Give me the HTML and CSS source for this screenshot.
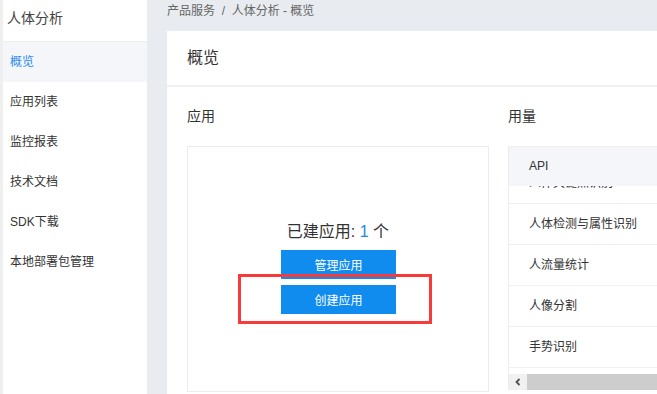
FILE: index.html
```html
<!DOCTYPE html>
<html lang="zh-CN">
<head>
  <meta charset="UTF-8" />
  <title>人体分析 - 概览</title>
<link rel="stylesheet" href="styles.css">
</head>
<body>
<div class="layout">
  <aside class="sidebar">
    <div class="side-title">人体分析</div>
    <ul class="menu">
      <li class="active">概览</li>
      <li>应用列表</li>
      <li>监控报表</li>
      <li>技术文档</li>
      <li>SDK下载</li>
      <li>本地部署包管理</li>
    </ul>
  </aside>

  <main class="main">
    <div class="crumb">产品服务 &nbsp;/&nbsp; 人体分析 - 概览</div>
    <div class="card">
      <div class="card-head">概览</div>
      <div class="card-body">
        <section class="apps">
          <h3 class="sec-title">应用</h3>
          <div class="app-box">
            <div class="app-count">已建应用: <span class="num">1</span> 个</div>
            <button class="btn">管理应用</button>
            <div class="highlight">
              <button class="btn">创建应用</button>
            </div>
          </div>
        </section>

        <section class="usage">
          <h3 class="sec-title">用量</h3>
          <div class="table">
            <div class="thead">API</div>
            <div class="tbody">
              <!-- body is scrolled a little under the header -->
              <div class="rows">
                <div class="row">人体关键点识别</div>
                <div class="row">人体检测与属性识别</div>
                <div class="row">人流量统计</div>
                <div class="row">人像分割</div>
                <div class="row">手势识别</div>
              </div>
            </div>
            <div class="hscroll">
              <div class="arrow">
                <svg width="8" height="8" viewBox="0 0 8 8"><path d="M5.5 1 L2.5 4 L5.5 7" fill="none" stroke="#505050" stroke-width="1.8"/></svg>
              </div>
              <div class="thumb"></div>
            </div>
          </div>
        </section>
      </div>
    </div>
  </main>
</div>
</body>
</html>
```

FILE: styles.css
```css
body {
  margin: 0;
  background-color: #e8ebef;
  font-family: "Liberation Sans", "Noto Sans CJK SC", sans-serif;
  color: #333;
  overflow: hidden;
}

.layout {
  display: flex;
  height: 394px;
  width: 760px;
}

.sidebar {
  width: 144px;
  flex-shrink: 0;
  background-color: #fff;
  border-left: 3px solid #efefef;
}

.side-title {
  height: 41px;
  line-height: 36px;
  padding-left: 4px;
  font-size: 14px;
  color: #444;
  border-bottom: 1px solid #eceef1;
}

.menu {
  list-style: none;
  margin: 0;
  padding: 0;
}

.menu li {
  height: 40px;
  line-height: 40px;
  padding-left: 7px;
  font-size: 12px;
  color: #333;
}

.menu li.active {
  background-color: #f4f6f9;
  color: #2b8ef0;
}

.main {
  flex: 1;
  padding-left: 20px;
}

.crumb {
  height: 31px;
  line-height: 22px;
  font-size: 12px;
  color: #666;
}

.card {
  background-color: #fff;
  height: 363px;
}

.card-head {
  height: 54px;
  line-height: 54px;
  padding-left: 20px;
  font-size: 16px;
  color: #333;
  border-bottom: 2px solid #eef0f3;
}

.card-body {
  display: flex;
  gap: 19px;
  padding-left: 20px;
}

.sec-title {
  margin: 0;
  height: 59px;
  line-height: 59px;
  font-size: 14px;
  font-weight: normal;
  color: #333;
}

.apps {
  width: 302px;
}

.app-box {
  height: 246px;
  border: 1px solid #ececec;
  display: flex;
  flex-direction: column;
  align-items: center;
  padding-top: 73px;
  box-sizing: border-box;
}

.app-count {
  font-size: 16px;
  line-height: 24px;
  margin-bottom: 6px;
  color: #333;
}

.app-count .num {
  color: #1e88e5;
}

.btn {
  width: 115px;
  height: 29px;
  border: none;
  background-color: #108cee;
  color: #fff;
  font-family: inherit;
  font-size: 12px;
  padding: 0;
  margin-left: 1px;
}

/* red annotation frame round the create button */
.highlight {
  margin-top: -5px;
  margin-left: -6px;
  width: 188px;
  height: 44px;
  border: 3px solid #f83a3a;
  display: flex;
  justify-content: center;
  align-items: center;
}

.highlight .btn {
  margin: 0 0 0 7px;
}

.usage {
  width: 260px;
}

.table {
  border-left: 1px solid #ececec;
  border-top: 1px solid #f0f0f0;
}

.thead {
  height: 39px;
  line-height: 39px;
  padding-left: 20px;
  font-size: 12px;
  background-color: #f4f6f9;
  color: #333;
}

.tbody {
  height: 182px;
  overflow: hidden;
}

.rows {
  margin-top: -23px;
}

.row {
  height: 40px;
  line-height: 40px;
  padding-left: 20px;
  font-size: 12px;
  color: #333;
  border-bottom: 1px solid #eef0f4;
}

.hscroll {
  display: flex;
  height: 16px;
  margin-top: 6px;
  background-color: #f1f1f1;
}

.arrow {
  width: 18px;
  display: flex;
  align-items: center;
  justify-content: center;
}

.thumb {
  flex: 1;
  background-color: #cdcdcd;
}
```
